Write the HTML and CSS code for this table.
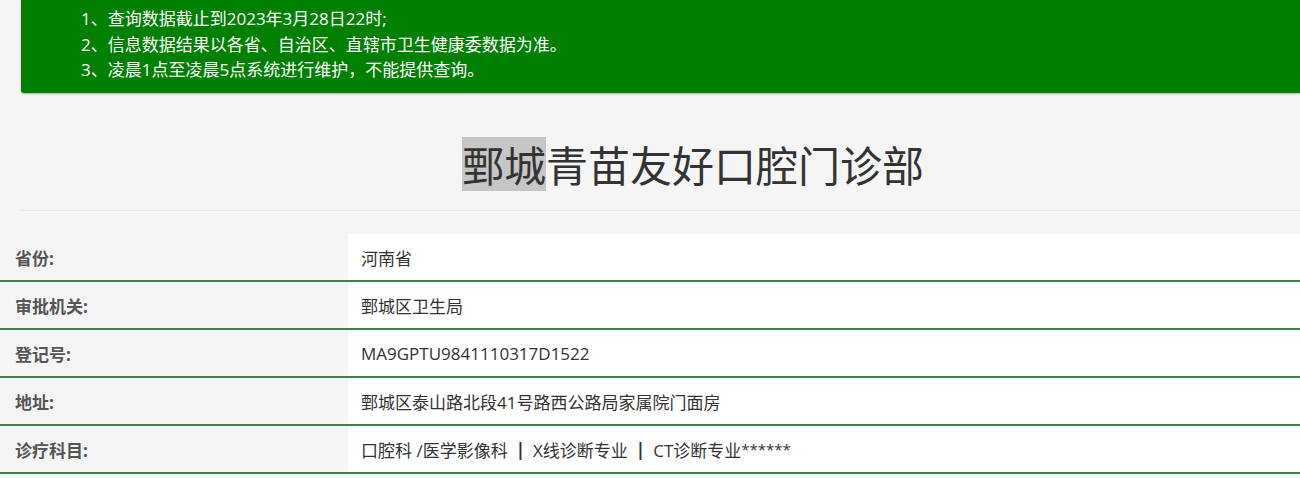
FILE: index.html
```html
<!DOCTYPE html>
<html lang="zh-CN">
<head>
<meta charset="utf-8">
<title>鄄城青苗友好口腔门诊部</title>
<link rel="stylesheet" href="styles.css">
</head>
<body>
<div class="notice">
  <div class="notice-line">1、查询数据截止到2023年3月28日22时;</div>
  <div class="notice-line">2、信息数据结果以各省、自治区、直辖市卫生健康委数据为准。</div>
  <div class="notice-line">3、凌晨1点至凌晨5点系统进行维护，不能提供查询。</div>
</div>
<h1 class="title"><span class="hl">鄄城</span>青苗友好口腔门诊部</h1>
<div class="divider"></div>
<div class="info">
  <div class="row"><div class="label">省份:</div><div class="value">河南省</div></div>
  <div class="row"><div class="label">审批机关:</div><div class="value">鄄城区卫生局</div></div>
  <div class="row"><div class="label">登记号:</div><div class="value">MA9GPTU9841110317D1522</div></div>
  <div class="row"><div class="label">地址:</div><div class="value">鄄城区泰山路北段41号路西公路局家属院门面房</div></div>
  <div class="row"><div class="label">诊疗科目:</div><div class="value">口腔科 /医学影像科<b class="sep">|</b>X线诊断专业<b class="sep">|</b>CT诊断专业<span class="stars">******</span></div></div>
</div>
</body>
</html>
```

FILE: styles.css
```css
html, body {
  margin: 0;
  padding: 0;
}
body {
  background: #f5f5f5;
  font-family: "Open Sans", "Noto Sans CJK SC", sans-serif;
  color: #333;
  overflow: hidden;
}
.notice {
  margin-left: 21px;
  background: #008000;
  color: #fff;
  font-size: 17px;
  line-height: 25.5px;
  padding: 6px 0 10px 60px;
  height: 77px;
  border-bottom-left-radius: 3px;
  box-shadow: 0 1px 2px rgba(0, 80, 0, 0.35);
}
.notice-line {
  white-space: nowrap;
}
.title {
  margin: 44px 0 0 0;
  padding-left: 86px;
  text-align: center;
  font-family: "Noto Sans CJK SC", sans-serif;
  font-size: 42px;
  font-weight: normal;
  line-height: 54px;
  height: 54px;
  color: #333;
}
.hl {
  display: inline-block;
  background: #c6c6c6;
  height: 54px;
  line-height: 54px;
}
.divider {
  margin: 19px 0 0 20px;
  height: 1px;
  background: #eaeaea;
}
.info {
  margin-top: 23px;
}
.row {
  display: flex;
  height: 46px;
  border-bottom: 2px solid #3c7f55;
  font-size: 17px;
}
.label {
  width: 333px;
  padding-left: 15px;
  display: flex;
  align-items: center;
  font-weight: bold;
  color: #555;
}
.value {
  flex: 1;
  background: #fff;
  padding-left: 13px;
  display: flex;
  align-items: center;
  color: #333;
  white-space: pre;
}
.sep {
  margin: 0 8px;
  color: #333;
}
.stars {
  font-size: 15px;
}
```
